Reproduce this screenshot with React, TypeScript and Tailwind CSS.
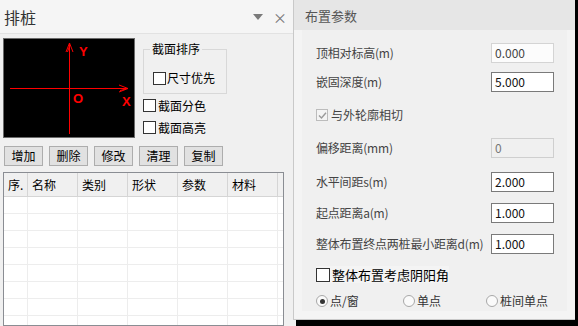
import React from 'react';

const font = { fontFamily: '"Noto Sans CJK SC", "Noto Sans", sans-serif' };

function Box({ checked = false, disabled = false, size = 'w-[13px] h-[13px]' }: { checked?: boolean; disabled?: boolean; size?: string }) {
  return (
    <span
      className={`${size} shrink-0 flex items-center justify-center border ${
        disabled ? 'border-[#bcbcbc] bg-[#f4f4f4]' : 'border-[#333] bg-white'
      }`}
    >
      {checked && (
        <svg width="9" height="9" viewBox="0 0 9 9">
          <path d="M1 4.5 L3.5 7 L8 1.8" fill="none" stroke="#9a9a9a" strokeWidth="1.4" />
        </svg>
      )}
    </span>
  );
}

function Radio({ label, on = false }: { label: string; on?: boolean }) {
  return (
    <label className="flex items-center gap-[2px] text-[12px] text-[#333]">
      <span className="w-[12px] h-[12px] rounded-full border border-[#a8a8a8] bg-[#fafafa] flex items-center justify-center">
        {on && <span className="w-[5px] h-[5px] rounded-full bg-[#333]" />}
      </span>
      {label}
    </label>
  );
}

function Field({ label, value, disabled = false, dim = false }: { label: string; value: string; disabled?: boolean; dim?: boolean }) {
  return (
    <div className="flex items-center justify-between h-[20px]">
      <span className="text-[12px] text-[#444] tracking-[-0.2px]">{label}</span>
      <div
        className={`w-[63px] h-[20px] border flex items-center px-[3px] text-[12px] ${
          disabled
            ? 'border-[#cfcfcf] bg-[#f0f0f0] text-[#777]'
            : dim
            ? 'border-[#d4d4d4] bg-[#fcfcfc] text-[#444]'
            : 'border-[#7a7a7a] bg-white text-[#111]'
        }`}
      >
        {value}
      </div>
    </div>
  );
}

const cols = ['序.', '名称', '类别', '形状', '参数', '材料'];
const widths = ['w-[24px]', 'w-[50px]', 'w-[50px]', 'w-[50px]', 'w-[50px]', 'w-[50px]'];

export default function App() {
  return (
    <div className="relative w-[578px] h-[326px] overflow-hidden bg-[#f0f0f0]" style={font}>
      {/* left dock panel */}
      <div className="w-[293px] h-full flex flex-col">
        <div className="h-[34px] shrink-0 bg-[#f5f5f5] border-b border-[#e2e2e2] flex items-center pl-[4px] pr-[6px]">
          <span className="text-[16px] text-[#333] leading-none">排桩</span>
          <span className="ml-auto flex items-center gap-[10px] text-[#777]">
            <svg width="10" height="6" viewBox="0 0 10 6">
              <path d="M0 0 H10 L5 6 Z" fill="#7a7a7a" />
            </svg>
            <span className="text-[14px] leading-none">×</span>
          </span>
        </div>

        <div className="flex pl-[3px] pt-[4px] gap-[8px] shrink-0">
          {/* preview canvas */}
          <div className="w-[132px] h-[100px] bg-black border border-[#6a6a6a] shrink-0">
            <svg width="130" height="98" viewBox="0 0 130 98">
              <g stroke="#ff0000" strokeWidth="1" fill="none">
                <line x1="65.5" y1="4" x2="65.5" y2="95" />
                <path d="M62 13 L65.5 4 L69 13 M63.5 13 L65.5 7" />
                <line x1="6" y1="49.5" x2="124" y2="49.5" />
                <path d="M115 46 L124 49.5 L115 53 M116 51.5 L122 50" />
              </g>
              <g fill="#ff0000" fontSize="13" fontWeight="bold" fontFamily="'Liberation Sans', sans-serif">
                <text x="75" y="17">Y</text>
                <text x="69" y="64">O</text>
                <text x="118" y="67">X</text>
              </g>
            </svg>
          </div>

          <div className="flex flex-col text-[12px] text-black">
            <div className="relative mt-[11px] w-[84px] h-[45px] border border-[#d8d8d8] pt-[19px] pl-[9px]">
              <span className="absolute -top-[8px] left-[6px] bg-[#f0f0f0] px-[2px] leading-[14px]">截面排序</span>
              <label className="flex items-center gap-[1px]">
                <Box />
                尺寸优先
              </label>
            </div>
            <label className="flex items-center gap-[2px] mt-[3px] h-[17px]">
              <Box />
              截面分色
            </label>
            <label className="flex items-center gap-[2px] mt-[5px] h-[17px]">
              <Box />
              截面高亮
            </label>
          </div>
        </div>

        <div className="flex gap-[6px] pl-[4px] mt-[8px] shrink-0">
          {['增加', '删除', '修改', '清理', '复制'].map((b) => (
            <button key={b} className="w-[39px] h-[20px] bg-[#e1e1e1] border border-[#adadad] text-[12px] text-black leading-none">
              {b}
            </button>
          ))}
        </div>

        <div className="ml-[3px] mt-[6px] w-[281px] flex-1 border border-[#8a8d93] bg-white flex flex-col overflow-hidden">
          <div className="flex h-[24px] shrink-0 bg-[#f0f0f0] border-b border-[#d5d5d5]">
            {cols.map((c, i) => (
              <div key={c} className={`${widths[i]} h-full border-r border-[#d5d5d5] flex items-center pl-[4px] text-[12px] text-black`}>
                {c}
              </div>
            ))}
          </div>
          {Array.from({ length: 8 }).map((_, r) => (
            <div key={r} className="flex h-[17px] shrink-0 border-b border-[#ededed]">
              {widths.map((w, i) => (
                <div key={i} className={`${w} h-full border-r border-[#ededed]`} />
              ))}
            </div>
          ))}
        </div>
      </div>

      {/* floating dialog */}
      <div className="absolute left-[293px] top-[-6px] w-[282px] h-[326px] bg-[#f4f4f4] border-l border-b border-[#c9c9c9] shadow-[3px_6px_0_#000] flex flex-col">
        <div className="h-[36px] bg-[#e6e6e6] flex items-end pb-[8px] pl-[11px] shrink-0">
          <span className="text-[13px] text-[#555] leading-none">布置参数</span>
        </div>
        <div className="mx-[8px] mb-[8px] flex-1 bg-[#f0f0f0] pl-[14px] pr-[13px] pt-[13px] flex flex-col">
          <Field label="顶相对标高(m)" value="0.000" dim />
          <div className="mt-[9px]">
            <Field label="嵌固深度(m)" value="5.000" />
          </div>
          <label className="flex items-center gap-[3px] mt-[14px] text-[12px] text-[#444]">
            <Box checked disabled size="w-[12px] h-[12px]" />
            与外轮廓相切
          </label>
          <div className="mt-[14px]">
            <Field label="偏移距离(mm)" value="0" disabled />
          </div>
          <div className="mt-[14px]">
            <Field label="水平间距s(m)" value="2.000" />
          </div>
          <div className="mt-[11px]">
            <Field label="起点距离a(m)" value="1.000" />
          </div>
          <div className="mt-[11px]">
            <Field label="整体布置终点两桩最小距离d(m)" value="1.000" />
          </div>
          <label className="flex items-center gap-[2px] mt-[12px] w-[133px] h-[17px] bg-[#f4f4f4] text-[13px] text-black">
            <Box size="w-[14px] h-[14px]" />
            整体布置考虑阴阳角
          </label>
          <div className="flex items-center mt-[9px]">
            <div className="w-[87px]">
              <Radio label="点/窗" on />
            </div>
            <div className="w-[83px]">
              <Radio label="单点" />
            </div>
            <Radio label="桩间单点" />
          </div>
        </div>
      </div>
    </div>
  );
}
